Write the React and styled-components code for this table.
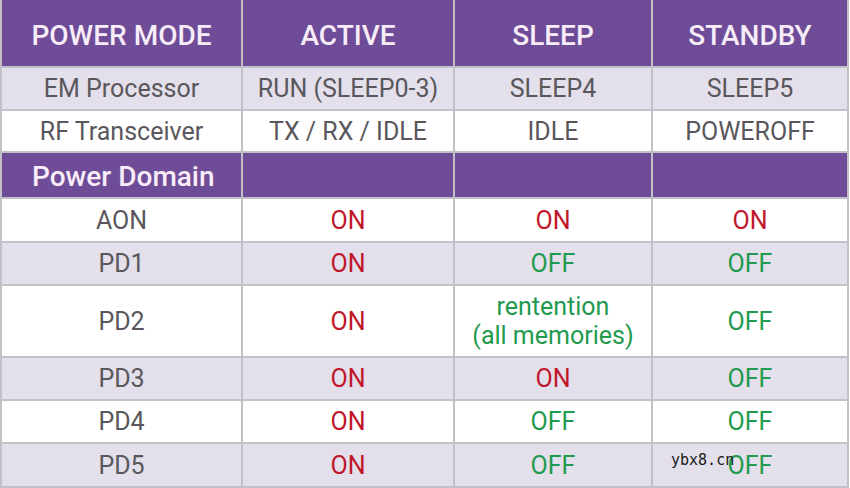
import React from 'react'
import styled, { createGlobalStyle } from 'styled-components'

const GlobalStyle = createGlobalStyle`
  html, body {
    margin: 0;
    padding: 0;
    background: #ffffff;
  }
  body {
    font-family: Roboto, "Noto Sans", "Liberation Sans", sans-serif;
  }
`

const rows = [
  { kind: 'head', cells: ['POWER MODE', 'ACTIVE', 'SLEEP', 'STANDBY'], h: 66 },
  { kind: 'shade', cells: ['EM Processor', 'RUN (SLEEP0-3)', 'SLEEP4', 'SLEEP5'], h: 41 },
  { kind: 'plain', cells: ['RF Transceiver', 'TX / RX / IDLE', 'IDLE', 'POWEROFF'], h: 40 },
  { kind: 'section', cells: ['Power Domain', '', '', ''], h: 44 },
  { kind: 'plain', cells: ['AON', 'ON', 'ON', 'ON'], h: 42 },
  { kind: 'shade', cells: ['PD1', 'ON', 'OFF', 'OFF'], h: 41 },
  { kind: 'plain', cells: ['PD2', 'ON', 'rentention\n(all memories)', 'OFF'], h: 70 },
  { kind: 'shade', cells: ['PD3', 'ON', 'ON', 'OFF'], h: 41 },
  { kind: 'plain', cells: ['PD4', 'ON', 'OFF', 'OFF'], h: 41 },
  { kind: 'shade', cells: ['PD5', 'ON', 'OFF', 'OFF'], h: 42 },
]

const tone = (text) => {
  if (text === 'ON') return 'on'
  if (text === 'OFF' || text.startsWith('rentention')) return 'off'
  return 'label'
}

function App() {
  return (
    <>
      <GlobalStyle />
      <Frame>
        <Grid style={{ gridTemplateRows: rows.map((r) => `${r.h}px`).join(' ') }}>
          {rows.map((row, i) =>
            row.cells.map((text, j) => (
              <Cell key={`${i}-${j}`} $kind={row.kind} $tone={tone(text)}>
                {text.split('\n').map((line, k) => (
                  <span key={k}>{line}</span>
                ))}
              </Cell>
            ))
          )}
        </Grid>
        <Watermark>ybx8.cn</Watermark>
      </Frame>
    </>
  )
}

export default App

const Frame = styled.div`
  position: relative;
  width: 850px;
  height: 488px;
  overflow: hidden;
`

const Grid = styled.div`
  display: grid;
  grid-template-columns: 239px 210px 196px 194px;
  gap: 2px;
  width: max-content;
  background: #c3c0c8;
  border: 2px solid #c3c0c8;
  border-top: none;
`

const bg = {
  head: '#6f4c97',
  section: '#6f4c97',
  shade: '#e3dfeb',
  plain: '#ffffff',
}

const colors = {
  on: '#c1172b',
  off: '#1f9a4e',
  label: '#59575c',
}

const pad = {
  head: '4px 0 0 0',
  section: '3px 0 0 30px',
  shade: '0',
  plain: '0',
}

const Cell = styled.div`
  display: flex;
  flex-direction: column;
  align-items: ${(p) => (p.$kind === 'section' ? 'flex-start' : 'center')};
  justify-content: center;
  padding: ${(p) => pad[p.$kind]};
  background: ${(p) => bg[p.$kind]};
  color: ${(p) =>
    p.$kind === 'head' || p.$kind === 'section' ? '#f8ecf8' : colors[p.$tone]};
  font-size: ${(p) => (p.$kind === 'head' || p.$kind === 'section' ? '28px' : '25px')};
  font-weight: ${(p) => (p.$kind === 'head' || p.$kind === 'section' ? 500 : 400)};
  line-height: 29px;
  white-space: nowrap;

  span {
    display: block;
  }
`

const Watermark = styled.div`
  position: absolute;
  left: 671px;
  top: 451px;
  font-family: "DejaVu Sans Mono", "Liberation Mono", monospace;
  font-size: 15px;
  color: #1a1a1a;
`
